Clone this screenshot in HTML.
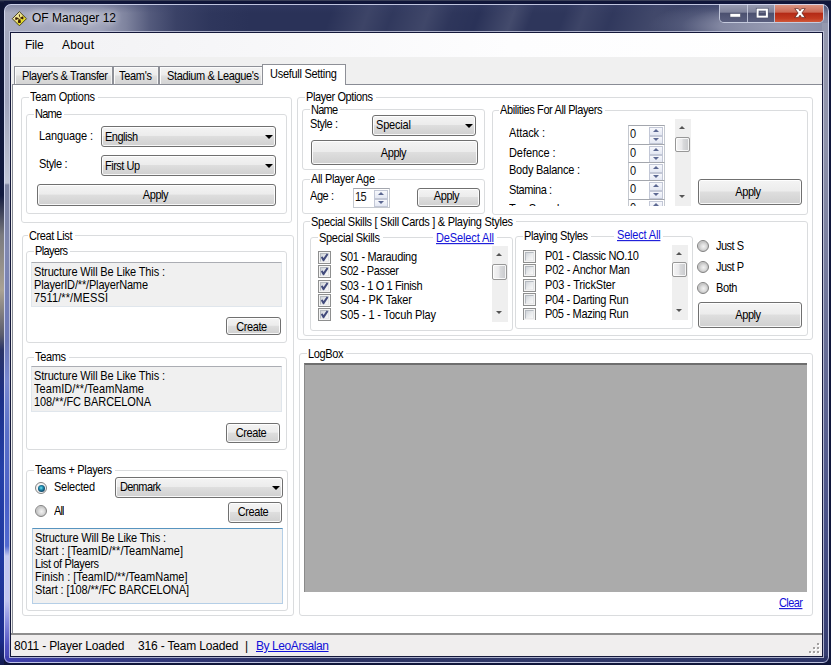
<!DOCTYPE html>
<html>
<head>
<meta charset="utf-8">
<title>OF Manager 12</title>
<style>
html,body{margin:0;padding:0;}
body{width:831px;height:665px;overflow:hidden;position:relative;background:#10163a;font-family:"Liberation Sans",sans-serif;font-size:11px;line-height:13px;color:#000;}
div,span,a{position:absolute;box-sizing:border-box;white-space:nowrap;}
/* desktop behind */
#desk{left:0;top:0;width:831px;height:665px;background:#10163a;}
#deskL{left:0;top:0;width:4px;height:665px;background:linear-gradient(to bottom,#2a3050 0px,#0e1434 3px,#121a40 195px,#7a7a7e 235px,#aaa294 290px,#5a5c6c 335px,#2a3468 350px,#1c3088 400px,#2440a8 470px,#2038a0 560px,#1c2c8c 640px,#141c50 665px);}
#deskT{left:0;top:0;width:831px;height:1px;background:#3a4058;}
/* window */
#win{left:4px;top:4px;width:825px;height:659px;border-radius:7px 7px 6px 6px;background:#262d55;overflow:hidden;}
#title{left:0;top:0;width:825px;height:29px;background:
 linear-gradient(to bottom,rgba(60,68,110,.35) 0px,rgba(60,68,110,0) 9px),
 linear-gradient(to right,rgba(168,171,192,1) 0px,rgba(164,168,190,.97) 95px,rgba(150,154,178,.78) 122px,rgba(125,130,160,.5) 146px,rgba(100,106,140,.28) 172px,rgba(80,88,125,.12) 205px,rgba(38,45,85,0) 245px),
 radial-gradient(ellipse 130px 30px at 775px 22px,rgba(156,160,182,.95) 0%,rgba(150,154,178,.8) 45%,rgba(120,126,156,.35) 75%,rgba(60,68,105,0) 100%),
 linear-gradient(110deg,rgba(255,255,255,0) 310px,rgba(255,255,255,.09) 345px,rgba(255,255,255,.03) 368px,rgba(255,255,255,.1) 402px,rgba(255,255,255,.02) 425px,rgba(255,255,255,0) 450px,rgba(255,255,255,.12) 482px,rgba(255,255,255,.02) 500px,rgba(255,255,255,.02) 530px,rgba(255,255,255,.09) 548px,rgba(255,255,255,.03) 575px,rgba(255,255,255,.11) 615px,rgba(255,255,255,.08) 660px,rgba(255,255,255,.04) 690px,rgba(255,255,255,.12) 730px),
 #2a3258;}
#frameL{left:0;top:27px;width:7px;height:632px;background:linear-gradient(to bottom,#a4a8be 0px,#a0a4bc 70px,#c0c4d4 150px,#c0c4d4 152px,#7c82a0 154px,#8088b0 220px,#6c78b8 310px,#7888d0 350px,#5a70c8 400px,#4a60c8 470px,#5068d0 515px,#c4c8f0 525px,#c0c4f0 570px,#8a8ee0 590px,#5050c0 615px,#4040b0 632px);}
#frameR{left:818px;top:19px;width:7px;height:640px;background:linear-gradient(to bottom,#9498ae 0px,#8e92aa 120px,#6c7298 300px,#4a5288 500px,#343c70 640px);}
#frameB{left:0;top:652px;width:825px;height:7px;background:linear-gradient(to right,#4040b0 0px,#343a80 120px,#2a3060 300px,#303868 500px,#2c3466 825px);}
#edge{left:0;top:0;width:825px;height:659px;border-radius:7px 7px 6px 6px;border:1px solid rgba(215,220,245,.85);}
#cedge{left:5px;top:27px;width:815px;height:627px;border:1px solid rgba(200,204,225,.8);}
#client{left:6px;top:28px;width:813px;height:625px;border:1px solid #14183a;background:#f0f0f0;overflow:hidden;}

#c{left:-11px;top:-33px;width:831px;height:665px;}
#menu{left:11px;top:33px;width:811px;height:24px;background:linear-gradient(to right,#f1f1f3 0px,#f6f6f8 200px,#fdfdfe 500px,#ffffff 811px);}
.m{font-size:12px;line-height:16px;height:16px;}
#page{left:12px;top:84px;width:830px;height:560px;background:#fff;border:1px solid #898c95;}
.tab{top:66px;height:18px;border:1px solid #8e9097;border-bottom:none;background:linear-gradient(to bottom,#f3f3f3 0,#ececec 8px,#dfdfdf 9px,#d4d4d4 17px);box-shadow:inset 1px 1px 0 #fbfbfb,inset -1px 0 0 #f4f4f4;}
.tab.sel{top:64px;height:21px;background:#fff;box-shadow:none;}
.t{height:13px;line-height:13px;font-size:11px;transform:scaleY(1.08);transform-origin:0 10px;}
.n{height:14px;line-height:14px;font-size:12.5px;transform:scaleX(.88);transform-origin:0 0;color:#111;}
.gb{border:1px solid #dadcde;border-radius:3px;}
.gl{background:#fff;height:13px;line-height:13px;padding:0 3px 0 1px;}
.gl b{font-weight:normal;display:inline-block;transform:scaleY(1.08);transform-origin:0 10px;}
.btn{border:1px solid #707070;border-radius:3px;background:linear-gradient(to bottom,#f4f4f4 0%,#ececec 46%,#dedede 50%,#d0d0d0 100%);box-shadow:inset 0 0 0 1px rgba(255,255,255,.85);text-align:center;}
.btn span{position:relative;display:inline-block;transform:scaleY(1.08);transform-origin:0 60%;}
.arr{width:0;height:0;border-left:4px solid transparent;border-right:4px solid transparent;border-top:4px solid #000;}
.tb{background:#f0f0f0;border:1px solid #e0e6ec;border-top-color:#abadb3;}
.tb.f{border-color:#b5cfe7;border-top-color:#5794bf;}
.lnk{color:#1010d8;text-decoration:underline;}
.chk{width:13px;height:13px;border:1px solid #8e8f8f;background:#f4f4f4;padding:0;}
.chk i{position:absolute;left:1px;top:1px;width:7px;height:7px;border:1px solid #b5bac0;border-right-color:#e2e4e6;border-bottom-color:#e9e9ea;background:linear-gradient(135deg,#cfd3d9 0%,#e8eaec 50%,#f8f8f8 100%);}
.chk svg{position:absolute;left:1px;top:1px;width:9px;height:9px;}
.rad{width:12px;height:12px;border-radius:50%;border:1px solid #818181;background:radial-gradient(circle at 55% 55%,#f2f2f2 0%,#dcdcdc 35%,#c2c2c2 62%,#ececec 78%,#f4f4f4 100%);}
.rad.on{background:#f4f4f4;}
.rad.on::after{content:"";position:absolute;left:1.5px;top:1.5px;width:7px;height:7px;border-radius:50%;background:radial-gradient(circle at 45% 42%,#7fe0ee 0%,#2fa5c4 24%,#15668a 50%,#0f3a58 80%,#174764 100%);}
.num{background:#fff;border:1px solid #c4c8cf;border-top-color:#a3a6ad;}
.sp{width:14px;height:8px;border:1px solid #c2c7d6;background:linear-gradient(to bottom,#f7f8fc,#e4e8f3);}
.sp::after{content:"";position:absolute;left:3px;top:1px;width:0;height:0;border-left:3px solid transparent;border-right:3px solid transparent;}
.sp.u::after{border-bottom:3px solid #5c6892;}
.sp.d::after{border-top:3px solid #5c6892;}
.sbar{background:#efefef;}
.thumb{border:1px solid #979797;border-radius:2px;background:linear-gradient(to right,#f5f5f5 0%,#e9e9eb 45%,#d9dadc 55%,#c8c9cc 100%);box-shadow:inset 0 0 0 1px rgba(255,255,255,.8);}
.au{width:0;height:0;border-left:3.3px solid transparent;border-right:3.3px solid transparent;border-bottom:3.6px solid #555;}
.ad{width:0;height:0;border-left:3.3px solid transparent;border-right:3.3px solid transparent;border-top:3.6px solid #555;}
#status{left:11px;top:633px;width:811px;height:23px;background:#f0eeee;border-top:2px solid #8e8e8e;}
.log{background:#ababab;border-top:2px solid #6e6e6e;border-left:1px solid #8a8a8a;}

#ttl{left:28px;top:6px;font-size:12px;line-height:16px;height:16px;color:#000;text-shadow:0 0 6px rgba(255,255,255,.9),0 0 10px rgba(255,255,255,.7);}
#icon{left:7px;top:6px;width:17px;height:17px;}
#cap{left:715px;top:0;width:105px;height:19px;border:1px solid rgba(205,210,228,.9);border-top:none;border-radius:0 0 5px 5px;overflow:hidden;}
#cap div{top:0;height:18px;}
.cmin,.cmax{background:linear-gradient(to bottom,#9a9eb2 0%,#80849c 45%,#4c5170 52%,#5a5f7e 100%);}
.cmin{left:0;width:28px;border-right:1px solid rgba(205,210,228,.8);}
.cmax{left:28px;width:27px;border-right:1px solid rgba(205,210,228,.8);}
.ccls{left:55px;width:48px;background:linear-gradient(to bottom,#dc9a88 0%,#cc6a56 45%,#b42a16 52%,#c23a20 80%,#d0583a 100%);}
#cap svg{position:absolute;left:0;top:0;}
</style>
</head>
<body>
<div id="desk"></div><div id="deskL"></div><div id="deskT"></div>
<div id="win">
 <div id="title"></div>
 <svg id="icon" style="position:absolute" viewBox="0 0 17 17">
  <defs><linearGradient id="ig" x1="0" y1="0" x2="1" y2="1"><stop offset="0" stop-color="#f6efc8"/><stop offset=".45" stop-color="#ece08a"/><stop offset=".6" stop-color="#e6dc30"/><stop offset="1" stop-color="#e2d818"/></linearGradient></defs>
  <path d="M8.4 1.6 L15.5 8.7 L8.4 15.8 L1.3 8.7 Z" fill="url(#ig)" stroke="#4c4620" stroke-width="1" stroke-linejoin="round"/>
  <path d="M8.2 8.2 L4.6 7 Q3.6 8.7 4.7 10.2 Z M8.6 8 L12 6.2 Q13 8 12 9.6 Z M7.3 9.3 L9.5 9.3 L9.9 12.4 Q8.4 13.4 6.9 12.4 Z M7.8 4.6 L9 4.6 L8.7 7 L8.1 7 Z" fill="#3a1c08"/>
 </svg>
 <span id="ttl">OF Manager 12</span>
 <div id="cap"><div class="cmin"></div><div class="cmax"></div><div class="ccls"></div>
  <svg width="105" height="19" viewBox="0 0 105 19">
   <rect x="10" y="9.5" width="10.5" height="3.6" fill="#fff" stroke="#4a4f68" stroke-width=".6"/>
   <rect x="37.4" y="5.4" width="9.6" height="7.4" fill="none" stroke="#fff" stroke-width="2.2"/>
   <rect x="36.2" y="4.2" width="12" height="9.8" fill="none" stroke="#4a4f68" stroke-width=".6"/>
   <rect x="39.4" y="7.4" width="5.6" height="3.4" fill="none" stroke="#4a4f68" stroke-width=".6"/>
   <path d="M74.8 4.6 L78.4 4.6 L80 6.9 L81.6 4.6 L85.2 4.6 L81.9 9 L85.2 13.4 L81.6 13.4 L80 11.1 L78.4 13.4 L74.8 13.4 L78.1 9 Z" fill="#fff" stroke="#5a2018" stroke-width=".7"/>
  </svg>
 </div>
 <div id="frameL"></div><div id="frameR"></div><div id="frameB"></div>
 <div id="edge"></div><div id="cedge"></div>
 <div id="client"><div id="c">
<div id="menu"></div>
<div id="page"></div>
<div class="tab" style="left:14px;width:99px"></div>
<div class="tab" style="left:113px;width:46px"></div>
<div class="tab" style="left:159px;width:104px"></div>
<div class="tab sel" style="left:262px;width:84px"></div>
<span class="t" style="left:22px;top:70px;letter-spacing:-0.365px;">Player's &amp; Transfer</span>
<span class="t" style="left:119px;top:70px;letter-spacing:-0.300px;">Team's</span>
<span class="t" style="left:167px;top:70px;letter-spacing:-0.359px;">Stadium &amp; League's</span>
<span class="t" style="left:270px;top:68px;letter-spacing:-0.281px;">Usefull Setting</span>
<span class="m" style="left:25px;top:37px;letter-spacing:-0.248px;">File</span>
<span class="m" style="left:62px;top:37px;letter-spacing:0.160px;">About</span>
<div class="gb" style="left:21px;top:97px;width:271px;height:126px;"><span class="gl" style="left:7px;top:-7px;letter-spacing:-0.261px;"><b>Team Options</b></span></div>
<div class="gb" style="left:26px;top:114px;width:261px;height:100px;"><span class="gl" style="left:7px;top:-7px;letter-spacing:-0.781px;"><b>Name</b></span></div>
<span class="t" style="left:39px;top:130px;letter-spacing:-0.118px;">Language :</span>
<span class="t" style="left:39px;top:158px;letter-spacing:-0.346px;">Style :</span>
<div class="btn" style="left:101px;top:126px;width:175px;height:21px;"><div class="arr" style="left:163px;top:8px"></div></div><span class="t" style="left:105px;top:131px;letter-spacing:-0.513px;">English</span>
<div class="btn" style="left:101px;top:155px;width:175px;height:21px;"><div class="arr" style="left:163px;top:8px"></div></div><span class="t" style="left:105px;top:160px;letter-spacing:-0.500px;">First Up</span>
<div class="btn" style="left:37px;top:184px;width:239px;height:22px;font-size:11px;padding-right:2px;"><span style="line-height:20px;top:-0.2px;letter-spacing:-0.445px;">Apply</span></div>
<div class="gb" style="left:22px;top:235px;width:272px;height:381px;"><span class="gl" style="left:5px;top:-6px;letter-spacing:-0.398px;"><b>Creat List</b></span></div>
<div class="gb" style="left:26px;top:251px;width:261px;height:92px;"><span class="gl" style="left:7px;top:-7px;letter-spacing:-0.615px;"><b>Players</b></span></div>
<div class="tb" style="left:31px;top:262px;width:251px;height:45px;"></div>
<span class="t" style="left:34px;top:266px;letter-spacing:-0.140px;">Structure Will Be Like This :</span>
<span class="t" style="left:34px;top:279px;letter-spacing:-0.161px;">PlayerID/**/PlayerName</span>
<span class="t" style="left:34px;top:292px;letter-spacing:0.120px;">7511/**/MESSI</span>
<div class="btn" style="left:226px;top:317px;width:55px;height:18px;font-size:11px;padding-right:4px;"><span style="line-height:16px;top:0.7px;letter-spacing:-0.406px;">Create</span></div>
<div class="gb" style="left:26px;top:357px;width:261px;height:93px;"><span class="gl" style="left:7px;top:-7px;letter-spacing:-0.352px;"><b>Teams</b></span></div>
<div class="tb" style="left:31px;top:366px;width:251px;height:46px;"></div>
<span class="t" style="left:34px;top:370px;letter-spacing:-0.140px;">Structure Will Be Like This :</span>
<span class="t" style="left:34px;top:383px;letter-spacing:0.069px;">TeamID/**/TeamName</span>
<span class="t" style="left:34px;top:396px;letter-spacing:-0.089px;">108/**/FC BARCELONA</span>
<div class="btn" style="left:226px;top:423px;width:54px;height:20px;font-size:11px;padding-right:4px;"><span style="line-height:18px;top:0px;letter-spacing:-0.406px;">Create</span></div>
<div class="gb" style="left:26px;top:470px;width:262px;height:141px;"><span class="gl" style="left:7px;top:-7px;letter-spacing:-0.330px;"><b>Teams + Players</b></span></div>
<div class="rad on" style="left:35px;top:482px"></div>
<span class="t" style="left:54px;top:481px;letter-spacing:-0.259px;">Selected</span>
<div class="btn" style="left:115px;top:477px;width:168px;height:21px;"><div class="arr" style="left:156px;top:8px"></div></div><span class="t" style="left:120px;top:481px;letter-spacing:-0.604px;">Denmark</span>
<div class="rad" style="left:35px;top:505px"></div>
<span class="t" style="left:54px;top:505px;letter-spacing:-0.917px;">All</span>
<div class="btn" style="left:228px;top:502px;width:54px;height:21px;font-size:11px;padding-right:4px;"><span style="line-height:19px;top:0px;letter-spacing:-0.406px;">Create</span></div>
<div class="tb f" style="left:32px;top:528px;width:251px;height:76px;"></div>
<span class="t" style="left:35px;top:532px;letter-spacing:-0.140px;">Structure Will Be Like This :</span>
<span class="t" style="left:35px;top:545px;letter-spacing:0.025px;">Start : [TeamID/**/TeamName]</span>
<span class="t" style="left:35px;top:558px;letter-spacing:-0.364px;">List of Players</span>
<span class="t" style="left:35px;top:571px;letter-spacing:-0.033px;">Finish : [TeamID/**/TeamName]</span>
<span class="t" style="left:35px;top:584px;letter-spacing:-0.112px;">Start : [108/**/FC BARCELONA]</span>
<div class="gb" style="left:297px;top:97px;width:516px;height:243px;"><span class="gl" style="left:7px;top:-7px;letter-spacing:-0.397px;"><b>Player Options</b></span></div>
<div class="gb" style="left:302px;top:109px;width:183px;height:61px;"><span class="gl" style="left:7px;top:-6px;letter-spacing:-0.781px;"><b>Name</b></span></div>
<span class="t" style="left:310px;top:118px;letter-spacing:-0.430px;">Style :</span>
<div class="btn" style="left:372px;top:115px;width:104px;height:21px;"><div class="arr" style="left:92px;top:8px"></div></div><span class="t" style="left:376px;top:119px;letter-spacing:-0.180px;">Special</span>
<div class="btn" style="left:311px;top:140px;width:167px;height:25px;font-size:11px;padding-right:2px;"><span style="line-height:23px;top:0.6px;letter-spacing:-0.445px;">Apply</span></div>
<div class="gb" style="left:302px;top:179px;width:183px;height:35px;"><span class="gl" style="left:7px;top:-7px;letter-spacing:-0.345px;"><b>All Player Age</b></span></div>
<span class="t" style="left:310px;top:190px;letter-spacing:-0.422px;">Age :</span>
<div class="num" style="left:353px;top:188px;width:37px;height:20px;"><div class="sp u" style="left:20px;top:1px;height:9px"></div><div class="sp d" style="left:20px;top:10px;height:8px"></div></div><span class="n" style="left:355px;top:190px;letter-spacing:-0.724px;">15</span>
<div class="btn" style="left:417px;top:188px;width:63px;height:19px;font-size:11px;padding-right:4px;"><span style="line-height:17px;top:-0.6px;letter-spacing:-0.445px;">Apply</span></div>
<div class="gb" style="left:492px;top:110px;width:316px;height:105px;"><span class="gl" style="left:6px;top:-7px;letter-spacing:-0.391px;"><b>Abilities For All Players</b></span></div>
<div style="left:0;top:0;width:692px;height:206px;overflow:hidden"><span class="t" style="left:509px;top:127px;letter-spacing:-0.098px;">Attack :</span><span class="t" style="left:509px;top:147px;letter-spacing:-0.074px;">Defence :</span><span class="t" style="left:509px;top:164px;letter-spacing:-0.231px;">Body Balance :</span><span class="t" style="left:509px;top:184px;letter-spacing:-0.434px;">Stamina :</span><span class="t" style="left:509px;top:203px;letter-spacing:-0.272px;">Top Speed :</span><div class="num" style="left:628px;top:125px;width:37px;height:20px;"><div class="sp u" style="left:20px;top:1px;height:9px"></div><div class="sp d" style="left:20px;top:10px;height:8px"></div></div><span class="n" style="left:630px;top:127px;">0</span><div class="num" style="left:628px;top:144px;width:37px;height:20px;"><div class="sp u" style="left:20px;top:1px;height:9px"></div><div class="sp d" style="left:20px;top:10px;height:8px"></div></div><span class="n" style="left:630px;top:146px;">0</span><div class="num" style="left:628px;top:162px;width:37px;height:20px;"><div class="sp u" style="left:20px;top:1px;height:9px"></div><div class="sp d" style="left:20px;top:10px;height:8px"></div></div><span class="n" style="left:630px;top:164px;">0</span><div class="num" style="left:628px;top:180px;width:37px;height:20px;"><div class="sp u" style="left:20px;top:1px;height:9px"></div><div class="sp d" style="left:20px;top:10px;height:8px"></div></div><span class="n" style="left:630px;top:182px;">0</span><div class="num" style="left:628px;top:199px;width:37px;height:20px;"><div class="sp u" style="left:20px;top:1px;height:9px"></div><div class="sp d" style="left:20px;top:10px;height:8px"></div></div><span class="n" style="left:630px;top:201px;">0</span></div>
<div class="sbar" style="left:675px;top:119px;width:16px;height:87px;"><div class="au" style="left:4px;top:7px"></div><div class="thumb" style="left:0px;top:18px;width:15px;height:15px"></div><div class="ad" style="left:4px;top:76px"></div></div>
<div class="btn" style="left:698px;top:179px;width:104px;height:26px;font-size:11px;padding-right:4px;"><span style="line-height:24px;top:-0.3px;letter-spacing:-0.445px;">Apply</span></div>
<div class="gb" style="left:303px;top:221px;width:505px;height:115px;"><span class="gl" style="left:6px;top:-6px;letter-spacing:-0.287px;"><b>Special Skills [ Skill Cards ] &amp; Playing Styles</b></span></div>
<div class="gb" style="left:310px;top:237px;width:203px;height:94px;"><span class="gl" style="left:7px;top:-6px;letter-spacing:-0.293px;"><b>Special Skills</b></span></div>
<a class="t lnk" style="left:433px;top:232px;background:#fff;padding:0 3px;letter-spacing:-0.119px;">DeSelect All</a>
<div class="chk" style="left:318px;top:251px"><i></i><svg viewBox="0 0 9 9"><path d="M0.9 4.5 L2.3 3.3 L3.6 5.1 L6.7 0.5 L8.4 1.5 L4 8.3 L3 8.3 Z" fill="#424b7c"/></svg></div>
<span class="t" style="left:340px;top:251px;letter-spacing:-0.309px;">S01 - Marauding</span>
<div class="chk" style="left:318px;top:265px"><i></i><svg viewBox="0 0 9 9"><path d="M0.9 4.5 L2.3 3.3 L3.6 5.1 L6.7 0.5 L8.4 1.5 L4 8.3 L3 8.3 Z" fill="#424b7c"/></svg></div>
<span class="t" style="left:340px;top:265px;letter-spacing:-0.418px;">S02 - Passer</span>
<div class="chk" style="left:318px;top:280px"><i></i><svg viewBox="0 0 9 9"><path d="M0.9 4.5 L2.3 3.3 L3.6 5.1 L6.7 0.5 L8.4 1.5 L4 8.3 L3 8.3 Z" fill="#424b7c"/></svg></div>
<span class="t" style="left:340px;top:280px;letter-spacing:-0.362px;">S03 - 1 O 1 Finish</span>
<div class="chk" style="left:318px;top:294px"><i></i><svg viewBox="0 0 9 9"><path d="M0.9 4.5 L2.3 3.3 L3.6 5.1 L6.7 0.5 L8.4 1.5 L4 8.3 L3 8.3 Z" fill="#424b7c"/></svg></div>
<span class="t" style="left:340px;top:294px;letter-spacing:-0.137px;">S04 - PK Taker</span>
<div class="chk" style="left:318px;top:308px"><i></i><svg viewBox="0 0 9 9"><path d="M0.9 4.5 L2.3 3.3 L3.6 5.1 L6.7 0.5 L8.4 1.5 L4 8.3 L3 8.3 Z" fill="#424b7c"/></svg></div>
<span class="t" style="left:340px;top:309px;letter-spacing:-0.150px;">S05 - 1 - Tocuh Play</span>
<div class="sbar" style="left:492px;top:246px;width:16px;height:76px;"><div class="au" style="left:4px;top:7px"></div><div class="thumb" style="left:0px;top:18px;width:15px;height:16px"></div><div class="ad" style="left:4px;top:65px"></div></div>
<div class="gb" style="left:515px;top:236px;width:178px;height:93px;"><span class="gl" style="left:7px;top:-7px;letter-spacing:-0.392px;"><b>Playing Styles</b></span></div>
<a class="t lnk" style="left:614px;top:229px;background:#fff;padding:0 3px;letter-spacing:-0.183px;">Select All</a>
<div style="left:0;top:0;width:670px;height:320px;overflow:hidden"><div class="chk" style="left:523px;top:250px"><i></i></div><span class="t" style="left:545px;top:250px;letter-spacing:-0.314px;">P01 - Classic NO.10</span><div class="chk" style="left:523px;top:264px"><i></i></div><span class="t" style="left:545px;top:264px;letter-spacing:-0.204px;">P02 - Anchor Man</span><div class="chk" style="left:523px;top:279px"><i></i></div><span class="t" style="left:545px;top:279px;letter-spacing:-0.161px;">P03 - TrickSter</span><div class="chk" style="left:523px;top:293px"><i></i></div><span class="t" style="left:545px;top:294px;letter-spacing:-0.284px;">P04 - Darting Run</span><div class="chk" style="left:523px;top:308px"><i></i></div><span class="t" style="left:545px;top:308px;letter-spacing:-0.303px;">P05 - Mazing Run</span></div>
<div class="sbar" style="left:672px;top:245px;width:16px;height:75px;"><div class="au" style="left:4px;top:7px"></div><div class="thumb" style="left:0px;top:17px;width:15px;height:15px"></div><div class="ad" style="left:4px;top:64px"></div></div>
<div class="rad" style="left:697px;top:240px"></div>
<span class="t" style="left:716px;top:240px;letter-spacing:-0.516px;">Just S</span>
<div class="rad" style="left:697px;top:261px"></div>
<span class="t" style="left:716px;top:261px;letter-spacing:-0.516px;">Just P</span>
<div class="rad" style="left:697px;top:282px"></div>
<span class="t" style="left:716px;top:282px;letter-spacing:-0.380px;">Both</span>
<div class="btn" style="left:698px;top:302px;width:104px;height:26px;font-size:11px;padding-right:4px;"><span style="line-height:24px;top:0px;letter-spacing:-0.445px;">Apply</span></div>
<div class="gb" style="left:299px;top:353px;width:514px;height:263px;"><span class="gl" style="left:7px;top:-6px;letter-spacing:-0.362px;"><b>LogBox</b></span></div>
<div class="log" style="left:304px;top:363px;width:503px;height:229px;"></div>
<a class="t lnk" style="left:779px;top:597px;letter-spacing:-0.574px;">Clear</a>
<div id="status"></div>
<span class="m" style="left:14px;top:638px;letter-spacing:-0.177px;">8011 - Player Loaded</span>
<span class="m" style="left:138px;top:638px;letter-spacing:-0.169px;">316 - Team Loaded</span>
<span class="m" style="left:245px;top:638px;">|</span>
<a class="m lnk" style="left:256px;top:638px;letter-spacing:-0.421px;">By LeoArsalan</a>
<div style="left:818px;top:644px;width:2px;height:2px;background:#fff"></div><div style="left:817px;top:643px;width:2px;height:2px;background:#a3a0a0"></div><div style="left:814px;top:648px;width:2px;height:2px;background:#fff"></div><div style="left:813px;top:647px;width:2px;height:2px;background:#a3a0a0"></div><div style="left:818px;top:648px;width:2px;height:2px;background:#fff"></div><div style="left:817px;top:647px;width:2px;height:2px;background:#a3a0a0"></div><div style="left:810px;top:652px;width:2px;height:2px;background:#fff"></div><div style="left:809px;top:651px;width:2px;height:2px;background:#a3a0a0"></div><div style="left:814px;top:652px;width:2px;height:2px;background:#fff"></div><div style="left:813px;top:651px;width:2px;height:2px;background:#a3a0a0"></div><div style="left:818px;top:652px;width:2px;height:2px;background:#fff"></div><div style="left:817px;top:651px;width:2px;height:2px;background:#a3a0a0"></div>

</div></div>
</div>
</body>
</html>
